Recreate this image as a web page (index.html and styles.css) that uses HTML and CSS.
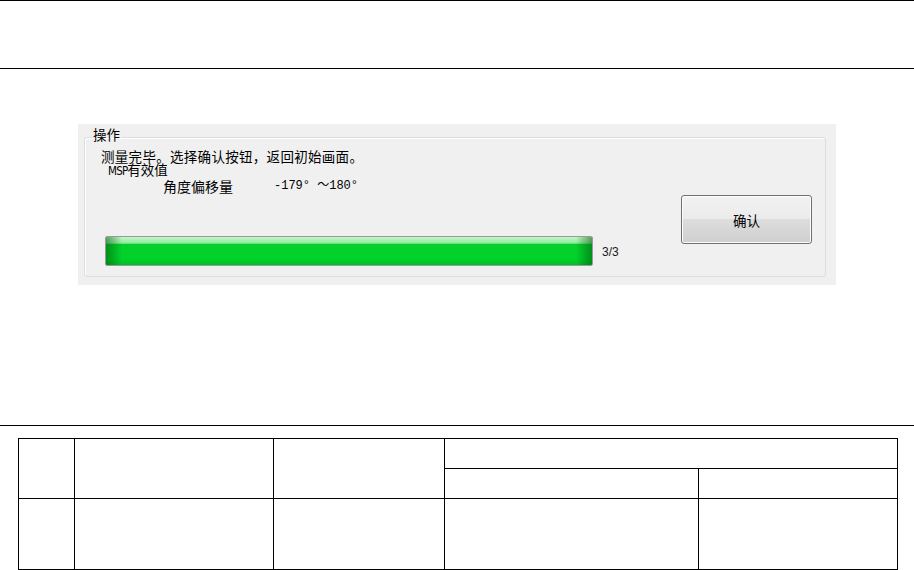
FILE: index.html
```html
<!DOCTYPE html>
<html lang="zh-CN">
<head>
    <meta charset="UTF-8">
    <meta name="viewport" content="width=device-width, initial-scale=1.0">
    <title>测量完毕</title>
    <link rel="stylesheet" href="styles.css">
</head>
<body>
    <header class="page-head"></header>

    <section class="screen">
        <div class="dialog">
            <fieldset class="group">
                <legend>操作</legend>
                <div class="message">
                    <p class="msg-line">测量完毕。选择确认按钮，返回初始画面。</p>
                    <p class="msg-sub"><span class="tag">MSP</span>有效值</p>
                    <p class="msg-range">
                        <span class="range-label">角度偏移量</span>
                        <span class="ascii range-val">-179° ～180°</span>
                    </p>
                </div>
                <button class="confirm">确认</button>
                <div class="progress-row">
                    <div class="progress"><div class="progress-fill" style="width: 100%"></div></div>
                    <span class="progress-count">3/3</span>
                </div>
            </fieldset>
        </div>
    </section>

    <hr class="rule">

    <table class="record">
        <colgroup>
            <col class="c-no">
            <col class="c-item">
            <col class="c-cond">
            <col class="c-res1">
            <col class="c-res2">
        </colgroup>
        <tr class="row-head">
            <td rowspan="2"></td>
            <td rowspan="2"></td>
            <td rowspan="2"></td>
            <td colspan="2"></td>
        </tr>
        <tr class="row-head">
            <td></td>
            <td></td>
        </tr>
        <tr class="row-body">
            <td></td>
            <td></td>
            <td></td>
            <td></td>
            <td></td>
        </tr>
    </table>
</body>
</html>
```

FILE: styles.css
```css
body {
    margin: 0;
    background-color: #ffffff;
    font-family: "Noto Sans CJK SC", "DejaVu Sans", sans-serif;
    color: #000000;
}
.page-head {
    height: 69px;
    box-sizing: border-box;
    border-top: 1px solid #000000;
    border-bottom: 1px solid #000000;
}
.screen {
    padding-top: 55px;
    padding-left: 78px;
}
.dialog {
    width: 758px;
    height: 161px;
    box-sizing: border-box;
    background-color: #f0f0f0;
    padding: 3px 10px 8px 6px;
}
.group {
    margin: 0;
    padding: 0;
    height: 100%;
    box-sizing: border-box;
    border: 1px solid #d5dfe5;
    border-radius: 3px;
    box-shadow: inset 1px 1px 0 #ffffff;
    display: grid;
    grid-template-columns: 1fr auto;
    grid-template-rows: auto 1fr;
}
.group legend {
    font-size: 13.5px;
    line-height: 14px;
    padding: 0 1px 6px;
    margin-left: 7px;
}
.message {
    grid-column: 1;
    grid-row: 1;
    padding-left: 16px;
    margin-top: 3px;
}
.message p {
    margin: 0;
    white-space: nowrap;
}
.msg-line {
    font-size: 13.5px;
    letter-spacing: 0.3px;
    line-height: 13px;
}
.msg-sub {
    font-size: 13.5px;
    line-height: 13px;
    padding-left: 7px;
}
.tag {
    font-family: "DejaVu Sans", sans-serif;
    font-stretch: condensed;
    font-size: 11.5px;
    letter-spacing: -0.8px;
}
.msg-range {
    font-size: 14px;
    line-height: 16px;
    padding-left: 62px;
    display: flex;
    gap: 41px;
}
.ascii {
    font-family: "Liberation Mono", "Noto Sans CJK SC", monospace;
    font-size: 12px;
}
.confirm {
    grid-column: 2;
    grid-row: 1 / span 2;
    align-self: start;
    margin: 48px 13px 0 0;
    width: 131px;
    height: 49px;
    border: 1px solid #707070;
    border-radius: 3px;
    background: linear-gradient(to bottom, #f2f2f2 0%, #ebebeb 48%, #dddddd 50%, #cfcfcf 100%);
    box-shadow: inset 0 0 0 1px #fcfcfc;
    font-family: "Noto Sans CJK SC", sans-serif;
    font-size: 13.5px;
    color: #000000;
    padding: 0;
}
.progress-row {
    grid-column: 1;
    grid-row: 2;
    align-self: end;
    display: flex;
    align-items: center;
    gap: 9px;
    padding-left: 20px;
    margin-bottom: 10px;
}
.progress {
    width: 488px;
    height: 30px;
    box-sizing: border-box;
    border: 1px solid #9a9a9a;
    border-radius: 2px;
    background-color: #e6e6e6;
    overflow: hidden;
}
.progress-fill {
    height: 100%;
    background:
        linear-gradient(to right, rgba(0, 90, 10, 0.55) 0, rgba(0, 90, 10, 0) 16px, rgba(0, 90, 10, 0) calc(100% - 16px), rgba(0, 90, 10, 0.55) 100%),
        linear-gradient(to bottom, #c4f6ca 0, #8feb9c 22%, #05cf2c 26%, #00d22a 80%, #03bd27 100%);
}
.progress-count {
    font-family: "Liberation Sans", Arial, sans-serif;
    font-size: 12px;
    color: #1a1a1a;
    margin-top: 1px;
}
.rule {
    margin: 140px 0 0;
    border: none;
    border-top: 1px solid #000000;
    height: 0;
}
.record {
    margin: 12px 0 0 18px;
    border-collapse: collapse;
    table-layout: fixed;
    width: 879px;
}
.record td {
    border: 1.5px solid #000000;
    padding: 0;
}
.row-head td {
    height: 29px;
}
.row-body td {
    height: 70px;
}
.c-no { width: 56px; }
.c-item { width: 199px; }
.c-cond { width: 171px; }
.c-res1 { width: 254px; }
.c-res2 { width: 199px; }
```
